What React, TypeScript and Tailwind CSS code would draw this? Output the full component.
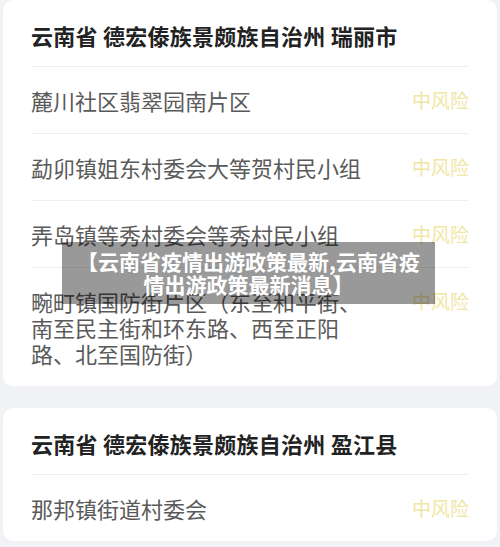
import React from "react";

const font = { fontFamily: '"Noto Sans CJK SC", "Noto Sans", sans-serif' };

type Card = { title: string; rows: string[] };

const cards: Card[] = [
  {
    title: "云南省 德宏傣族景颇族自治州 瑞丽市",
    rows: [
      "麓川社区翡翠园南片区",
      "勐卯镇姐东村委会大等贺村民小组",
      "弄岛镇等秀村委会等秀村民小组",
      "畹町镇国防街片区（东至和平街、南至民主街和环东路、西至正阳路、北至国防街）",
    ],
  },
  {
    title: "云南省 德宏傣族景颇族自治州 盈江县",
    rows: ["那邦镇街道村委会"],
  },
];

export default function App() {
  return (
    <div
      className="relative w-[500px] h-[547px] overflow-hidden bg-[#f1f2f5]"
      style={font}
    >
      <div className="flex flex-col gap-[22px] px-[3px]">
        {cards.map((c, ci) => (
          <div key={ci} className="bg-white rounded-[10px] px-[28px]">
            <div className="border-b border-[#efefef] pt-[22px] pb-[18px] text-[22px] leading-[26px] tracking-[0.25px] font-bold text-[#222222]">
              {c.title}
            </div>
            {c.rows.map((r, ri) => (
              <div
                key={ri}
                className={
                  "flex items-start justify-between py-[20px] " +
                  (ri < c.rows.length - 1 ? "border-b border-[#efefef]" : "")
                }
              >
                <div className="w-[340px] text-[22px] leading-[26px] text-[#5a5a5a]">
                  {r}
                </div>
                <div className="text-[19px] leading-[26px] text-[#f1e6a4]">
                  中风险
                </div>
              </div>
            ))}
          </div>
        ))}
      </div>
      <div className="absolute left-[62px] top-[242px] w-[373px] h-[62px] bg-[rgba(0,0,0,0.4)] flex items-center justify-center">
        <div className="w-[352px] text-center text-white font-bold text-[21px] leading-[23px]">
          【云南省疫情出游政策最新,云南省疫情出游政策最新消息】
        </div>
      </div>
    </div>
  );
}
